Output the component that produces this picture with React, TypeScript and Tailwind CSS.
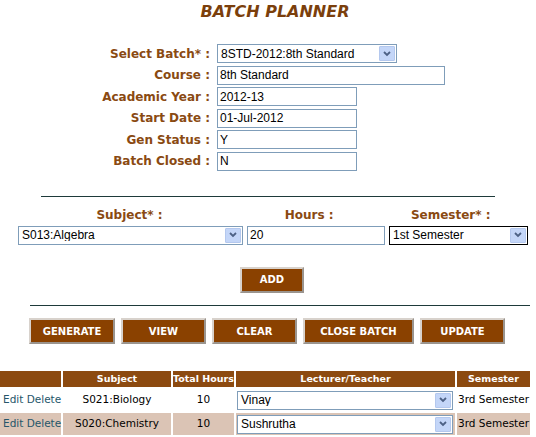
import React from "react";

const V = { fontFamily: '"DejaVu Sans", Verdana, sans-serif' };
const A = { fontFamily: '"Liberation Sans", Arial, sans-serif' };

function Arrow() {
  return (
    <div className="w-[16px] h-[15px] mr-[1px] flex items-center justify-center bg-[#c4d6f8] border border-[#b4c8ee] rounded-[1px]">
      <svg width="8" height="6" viewBox="0 0 8 6">
        <path d="M1 1 L4 4 L7 1" fill="none" stroke="#4d6185" strokeWidth="1.8" />
      </svg>
    </div>
  );
}

function Sel({ value, className, dark }: { value: string; className: string; dark?: boolean }) {
  return (
    <div
      className={`flex items-center bg-white border ${dark ? "border-black" : "border-[#7f9db9]"} ${className}`}
      style={A}
    >
      <span className="flex-1 pl-[3px] text-[12px] text-black leading-none whitespace-nowrap overflow-hidden">{value}</span>
      <Arrow />
    </div>
  );
}

function Inp({ value, className }: { value: string; className: string }) {
  return (
    <div className={`flex items-center bg-white border border-[#7f9db9] ${className}`} style={A}>
      <span className="pl-[2px] text-[12px] text-black leading-none whitespace-nowrap">{value}</span>
    </div>
  );
}

function Btn({ label, w }: { label: string; w: string }) {
  return (
    <div
      className={`${w} h-[26px] flex items-center justify-center bg-[#8a4100] border-2 border-t-[#d8d2cc] border-l-[#d8d2cc] border-r-[#9a948e] border-b-[#9a948e] text-white text-[10px] font-bold`}
      style={V}
    >
      {label}
    </div>
  );
}

export default function App() {
  const rows: [string, React.ReactNode][] = [
    ["Select Batch* :", <Sel value="8STD-2012:8th Standard" className="w-[180px] h-[19px]" />],
    ["Course :", <Inp value="8th Standard" className="w-[228px] h-[19px]" />],
    ["Academic Year :", <Inp value="2012-13" className="w-[140px] h-[19px]" />],
    ["Start Date :", <Inp value="01-Jul-2012" className="w-[140px] h-[19px]" />],
    ["Gen Status :", <Inp value="Y" className="w-[140px] h-[19px]" />],
    ["Batch Closed :", <Inp value="N" className="w-[140px] h-[19px]" />],
  ];
  return (
    <div className="w-[536px] h-[437px] bg-white overflow-hidden flex flex-col" style={V}>
      <div className="pt-[1px] h-[24px] pl-[14px] text-center text-[16px] font-bold italic text-[#7b3f0c] leading-[22px]">
        BATCH PLANNER
      </div>
      <div className="mt-[21px] flex flex-col gap-[2.6px]">
        {rows.map(([l, c], i) => (
          <div key={i} className="flex items-center h-[19px]">
            <div className="w-[217px] pr-[7px] text-right text-[12px] font-bold text-[#8a4a12] whitespace-nowrap">{l}</div>
            {c}
          </div>
        ))}
      </div>
      <div className="mt-[25px] ml-[41px] w-[454px] h-[2px] bg-[#1e3a3a]" />
      <div className="mt-[11px] flex h-[15px] text-[12px] font-bold text-[#8a4a12] leading-[15px]">
        <div className="w-[238px] ml-[18px] text-center pr-[12px]">Subject* :</div>
        <div className="w-[124px] ml-[-8px] text-center pl-[6px]">Hours :</div>
        <div className="w-[140px] ml-[30px] text-center pr-[32px]">Semester* :</div>
      </div>
      <div className="mt-[3px] flex items-center gap-[4px] pl-[18px]">
        <Sel value="S013:Algebra" className="w-[225px] h-[19px]" />
        <Inp value="20" className="w-[138px] h-[19px]" />
        <Sel value="1st Semester" className="w-[139px] h-[19px]" dark />
      </div>
      <div className="mt-[22px] flex pl-[240px]">
        <Btn label="ADD" w="w-[64px]" />
      </div>
      <div className="mt-[12px] ml-[30px] w-[500px] h-[2px] bg-[#1e3a3a]" />
      <div className="mt-[12px] flex gap-[6px] pl-[29px]">
        <Btn label="GENERATE" w="w-[86px]" />
        <Btn label="VIEW" w="w-[85px]" />
        <Btn label="CLEAR" w="w-[85px]" />
        <Btn label="CLOSE BATCH" w="w-[111px]" />
        <Btn label="UPDATE" w="w-[85px]" />
      </div>
      <div className="mt-[25px]">
        <table className="table-fixed border-separate border-spacing-[2px] w-[534px] ml-[-2px] text-[10.5px]" style={V}>
          <colgroup>
            <col className="w-[61px]" />
            <col className="w-[108px]" />
            <col className="w-[61px]" />
            <col className="w-[219px]" />
            <col className="w-[73px]" />
          </colgroup>
          <thead>
            <tr className="h-[16px] bg-[#8c4a10] text-white text-[9.5px] font-bold">
              <th className="p-0"></th>
              <th className="p-0 font-bold">Subject</th>
              <th className="p-0 font-bold whitespace-nowrap">Total Hours</th>
              <th className="p-0 font-bold">Lecturer/Teacher</th>
              <th className="p-0 font-bold">Semester</th>
            </tr>
          </thead>
          <tbody>
            {[
              ["S021:Biology", "Vinay", "bg-white"],
              ["S020:Chemistry", "Sushrutha", "bg-[#dbc4b5]"],
            ].map(([s, t, bg], i) => (
              <tr key={i} className={`h-[22px] ${bg}`}>
                <td className="p-0 pl-[3px] text-[#26566a] whitespace-nowrap">Edit Delete</td>
                <td className="p-0 text-center text-black">{s}</td>
                <td className="p-0 text-center text-black">10</td>
                <td className="p-0 pl-[1px]">
                  <Sel value={t} className="w-[216px] h-[19px]" />
                </td>
                <td className="p-0 pl-[1px] text-black whitespace-nowrap">3rd Semester</td>
              </tr>
            ))}
          </tbody>
        </table>
      </div>
    </div>
  );
}
